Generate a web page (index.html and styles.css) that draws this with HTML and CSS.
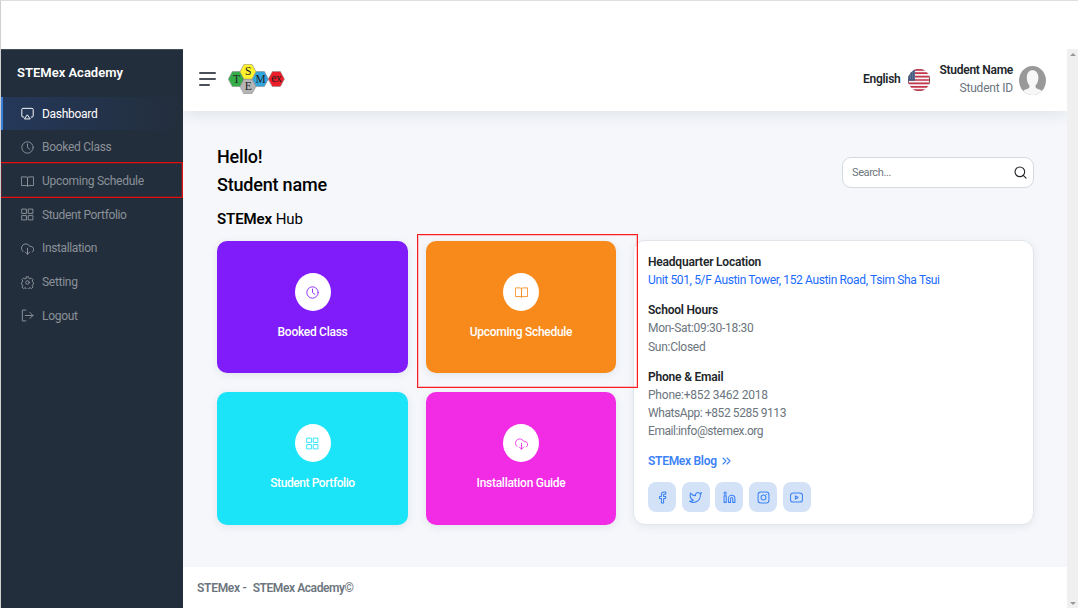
FILE: index.html
```html
<!DOCTYPE html>
<html lang="en">
<head>
<meta charset="utf-8">
<title>STEMex Academy</title>
<link rel="stylesheet" href="styles.css">
</head>
<body>
<svg class="defs" width="0" height="0">
  <defs>
    <symbol id="clock" viewBox="0 0 24 24"><circle cx="12" cy="12" r="10.5"/><path d="M12 5.5V12l4.5 3.5"/></symbol>
    <symbol id="book" viewBox="0 0 24 24"><path d="M1.5 3.5h8a2.5 2.5 0 0 1 2.5 2.5v15a2 2 0 0 0-2-1.5H1.5zM22.5 3.5h-8A2.5 2.5 0 0 0 12 6v15a2 2 0 0 1 2-1.5h8.500z"/></symbol>
    <symbol id="grid" viewBox="0 0 24 24"><path d="M2 2h8v8H2zM14 2h8v8h-8zM14 14h8v8h-8zM2 14h8v8H2z"/></symbol>
    <symbol id="cloud" viewBox="0 0 24 24"><path d="M12 11.500v11M8 18.500l4 4 4-4M3.500 17.500A8 8 0 1 1 16 8h1.500a5.800 5.800 0 0 1 3.500 10.500"/></symbol>
    <symbol id="airplay" viewBox="0 0 24 24"><path d="M5 18.500H3.500a2 2 0 0 1-2-2V4.500a2 2 0 0 1 2-2h17a2 2 0 0 1 2 2v12a2 2 0 0 1-2 2H19M12 15l5 7H7z"/></symbol>
    <symbol id="gear" viewBox="0 0 24 24"><circle cx="12" cy="12" r="3.300"/><path d="M10 1.500h4l.7 3 2 .9 2.700-1.600 2.800 2.800-1.600 2.700.9 2 2 .7v3l-2 .7-.9 2 1.600 2.700-2.800 2.800-2.700-1.600-2 .9-.7 2h-4l-.7-2-2-.9-2.700 1.600-2.800-2.800 1.600-2.700-.9-2-2-.7v-3l2-.7.9-2L1.800 6.600l2.800-2.800 2.700 1.600 2-.9z"/></symbol>
    <symbol id="logout" viewBox="0 0 24 24"><path d="M9 2H2.500v20H9M8 12h14M16.500 6.500L22 12l-5.500 5.500"/></symbol>
  </defs>
</svg>
<div class="page">
  <aside class="sidebar">
    <div class="brand">STEMex Academy</div>
    <nav class="menu">
      <a class="item active"><svg><use href="#airplay"/></svg><span>Dashboard</span></a>
      <a class="item"><svg><use href="#clock"/></svg><span>Booked Class</span></a>
      <a class="item marked"><svg><use href="#book"/></svg><span>Upcoming Schedule</span></a>
      <a class="item snug"><svg><use href="#grid"/></svg><span>Student Portfolio</span></a>
      <a class="item snug"><svg><use href="#cloud"/></svg><span>Installation</span></a>
      <a class="item"><svg><use href="#gear"/></svg><span>Setting</span></a>
      <a class="item"><svg><use href="#logout"/></svg><span>Logout</span></a>
    </nav>
  </aside>
  <div class="main">
    <header class="topbar">
      <div class="burger"><i></i><i></i><i></i></div>
      <svg class="logo" viewBox="0 0 57 30">
        <g stroke="#888" stroke-width=".6">
          <path fill="#35ae49" d="M.4 15l4-7.400h8l4 7.400-4 7.400h-8z"/>
          <path fill="#b5b5b5" d="M12 22.300l4-7.400h8l4 7.400-4 7.400h-8z"/>
          <path fill="#fff22d" d="M12 7.700L16 .3h8l4 7.400-4 7.400h-8z"/>
          <path fill="#2fa5df" d="M24.400 15l4-7.400h8l4 7.400-4 7.400h-8z"/>
          <path fill="#ed1c28" d="M40.400 15l4-7.400h8l4 7.400-4 7.400h-8z"/>
        </g>
        <g class="logo-text"><text x="8.400" y="18.700">T</text><text x="20" y="11.300">S</text><text x="20" y="26.300">E</text><text x="32.400" y="18.700">M</text><text x="48.400" y="18">ex</text></g>
      </svg>
      <div class="account">
        <span class="language">English</span>
        <svg class="flag" viewBox="0 0 22 22">
          <clipPath id="round"><circle cx="11" cy="11" r="11"/></clipPath>
          <g clip-path="url(#round)">
            <path fill="#f6f3f4" d="M0 0h22v22H0z"/>
            <path stroke="#c4354b" stroke-width="1.700" d="M0 .8h22M0 4.200h22M0 7.600h22M0 11h22M0 14.400h22M0 17.800h22M0 21.200h22"/>
            <path fill="#465b81" stroke="none" d="M0 0h7v11.800H0z"/>
            <path stroke="#a9b5c8" stroke-width=".7" stroke-dasharray=".8 1.300" d="M0 3h7M0 5h7M0 7h7M0 9h7"/>
          </g>
        </svg>
        <div class="who"><b>Student Name</b><span>Student ID</span></div>
        <svg class="avatar" viewBox="0 0 26 28">
          <clipPath id="oval"><ellipse cx="13" cy="14" rx="13" ry="14"/></clipPath>
          <g clip-path="url(#oval)"><path fill="#999" d="M0 0h26v28H0z"/><path fill="#f7f7f7" d="M7.500 11C7.500 6.500 9.800 4 13 4s5.700 2.500 5.700 7c0 3.500-1.200 6-2.700 7.500v2c0 1.500 5 2 6.500 4V28h-19v-3.500c1.500-2 6.500-2.500 6.500-4v-2C8.500 17 7.500 14.500 7.500 11z"/></g>
        </svg>
      </div>
    </header>
    <main class="content">
      <div class="intro">
        <div class="greeting"><div>Hello!</div><div>Student name</div></div>
        <div class="search"><span>Search...</span><svg viewBox="0 0 14 14"><circle cx="6.300" cy="6.300" r="5.200"/><path d="M10 10l3 3"/></svg></div>
      </div>
      <h2 class="hub"><b>STEMex</b> Hub</h2>
      <div class="board">
        <div class="tile violet"><div class="disc"><svg><use href="#clock"/></svg></div><span>Booked Class</span></div>
        <div class="tile orange"><div class="disc"><svg><use href="#book"/></svg></div><span>Upcoming Schedule</span><div class="frame"></div></div>
        <div class="tile cyan"><div class="disc"><svg><use href="#grid"/></svg></div><span class="tighter">Student Portfolio</span></div>
        <div class="tile pink"><div class="disc"><svg><use href="#cloud"/></svg></div><span>Installation Guide</span></div>
        <section class="info">
          <div class="group"><b>Headquarter Location</b><a class="tight">Unit 501, 5/F Austin Tower, 152 Austin Road, Tsim Sha Tsui</a></div>
          <div class="group"><b>School Hours</b><span>Mon-Sat:09:30-18:30</span><span>Sun:Closed</span></div>
          <div class="group"><b>Phone &amp; Email</b><span class="loose">Phone:+852 3462 2018</span><span class="tighter">WhatsApp: +852 5285 9113</span><span class="tighter">Email:info@stemex.org</span></div>
          <div class="blog"><span>STEMex Blog</span><svg viewBox="0 0 9 8"><path d="M1 1l3 3-3 3M5 1l3 3-3 3"/></svg></div>
          <div class="social">
            <a><svg viewBox="0 0 24 24"><path d="M18 2h-3a5 5 0 0 0-5 5v3H6.500v4H10v8h4v-8h3.500l.5-4h-4V7a1 1 0 0 1 1-1h3z"/></svg></a>
            <a><svg viewBox="0 0 24 24"><path d="M23 3a10.900 10.900 0 0 1-3.140 1.530 4.480 4.480 0 0 0-7.860 3v1A10.660 10.660 0 0 1 3 4s-4 9 5 13a11.640 11.640 0 0 1-7 2c9 5 20 0 20-11.500a4.500 4.500 0 0 0-.08-.83A7.720 7.720 0 0 0 23 3z"/></svg></a>
            <a><svg viewBox="0 0 24 24"><path d="M16 8a6 6 0 0 1 6 6v7h-4v-7a2 2 0 0 0-4 0v7h-4v-7a6 6 0 0 1 6-6zM2 9h4v12H2z"/><circle cx="4" cy="4" r="2"/></svg></a>
            <a><svg viewBox="0 0 24 24"><rect x="2" y="2" width="20" height="20" rx="5"/><circle cx="12" cy="12" r="4.500"/><path d="M17.500 6.500h.1"/></svg></a>
            <a><svg viewBox="0 0 24 24"><rect x="1" y="3.500" width="22" height="17" rx="5"/><path d="M10 9l5 3-5 3z"/></svg></a>
          </div>
        </section>
      </div>
    </main>
    <footer class="footer"><span>STEMex -</span><span class="tighter">STEMex Academy©</span></footer>
  </div>
  <div class="scrollbar"><i class="up"></i><i class="down"></i></div>
</div>
</body>
</html>
```
FILE: styles.css
```css
* { box-sizing: border-box; }
body {
  margin: 0;
  height: 608px;
  overflow: hidden;
  padding-top: 48px;
  border-top: 1px solid #dedede;
  border-left: 1px solid #d0d0d0;
  background: #fff;
  font-family: Roboto, "Liberation Sans", sans-serif;
  font-size: 12px;
  letter-spacing: -.28px;
  color: #212529;
}
svg { fill: none; stroke: currentColor; stroke-width: 1.6; stroke-linejoin: round; stroke-linecap: round; flex: none; }
.defs { position: absolute; }
.page { display: grid; grid-template-columns: 182px 884px 11px; height: 559px; }
.page span, .page b { white-space: nowrap; }

/* Sidebar */
.sidebar { background: #232e3c; border-top: 1px solid #42505b; }
.brand { height: 46.500px; padding-left: 16px; line-height: 45px; color: #fff; font-weight: 600; font-size: 13px; letter-spacing: 0; }
.menu { display: flex; flex-direction: column; }
.item { display: flex; align-items: center; gap: 8px; height: 33.67px; padding: 1px 0 0 20px; color: #8a9199; }
.item svg { width: 13px; height: 13px; stroke-width: 1.8; }
.item.snug { letter-spacing: -.36px; }
.active { color: #fff; background: linear-gradient(90deg, #24385a, #232e3c); box-shadow: inset 2px 0 #3b7ddd; }
.marked { position: relative; }
.marked::after { content: ""; position: absolute; inset: -2px 0 -1px -1px; border: 1px solid #e01015; box-shadow: inset 0 0 0 1px rgba(220, 16, 21, .3); }

/* Header */
.main { display: flex; flex-direction: column; }
.topbar { position: relative; display: flex; align-items: center; height: 62px; padding: 0 21px 2px 16px; background: #fff; box-shadow: 0 4px 14px rgba(45, 65, 80, .1); clip-path: inset(0 0 -24px 0); }
.burger { display: flex; flex-direction: column; gap: 4px; width: 17px; margin-right: 12px; }
.burger i { height: 2px; background: #495057; border-radius: 1px; }
.burger i:last-child { width: 11px; }
.logo { width: 57px; height: 30px; }
.logo-text { font: 11.500px "Liberation Serif", serif; text-anchor: middle; fill: #222; stroke: none; }
.account { display: flex; align-items: center; margin-left: auto; }
.language { width: 37px; margin-right: 8px; font-weight: 600; }
.flag { width: 22px; height: 22px; margin-top: 1px; stroke-linecap: butt; }
.who { display: flex; flex-direction: column; align-items: flex-end; margin: -1px 6px 0 8px; width: 75px; line-height: 18px; }
.who b { font-weight: 600; }
.who span { color: #6c757d; letter-spacing: -.2px; }
.avatar { width: 27px; height: 29px; margin-top: 2px; stroke: none; }

/* Content */
.content { height: 456px; padding: 32px 34px 0; background: #f5f7fb; color: #000; }
.intro { display: flex; justify-content: space-between; }
.greeting { font-size: 18px; font-weight: 500; line-height: 28px; letter-spacing: -.2px; }
.search { display: flex; align-items: center; justify-content: space-between; width: 192px; height: 31px; margin-top: 14px; margin-right: -1px; padding: 0 6px 1px 9px; border: 1px solid #d5dae0; border-radius: 9px; background: #fff; font-size: 11px; letter-spacing: -.4px; color: #6c757d; }
.search svg { width: 13px; height: 13px; color: #212529; stroke-width: 1.2; }
.hub { margin: 9px 0 0; font-size: 15px; line-height: 22px; font-weight: 400; letter-spacing: -.1px; }
.hub b { font-weight: 600; }
.board { display: grid; grid-template-columns: 191px 190px 400px; grid-template-rows: 132px 133px; column-gap: 18px; row-gap: 19px; margin-top: 11px; }
.tile { position: relative; display: flex; flex-direction: column; align-items: center; padding-top: 32px; border-radius: 10px; color: #fff; box-shadow: 0 2px 9px rgba(45, 65, 80, .1); line-height: 14px; font-weight: 500; }
.disc { display: grid; place-items: center; width: 36px; height: 38px; margin-bottom: 14px; border-radius: 50%; background: #fff; }
.disc svg { width: 13px; height: 13px; }
.violet { background: #801bf9; } .violet .disc { color: #801bf9; }
.orange { background: #f78a1b; } .orange .disc { color: #f78a1b; }
.cyan { background: #1be3f8; } .cyan .disc { color: #1be3f8; }
.pink { background: #f22be4; } .pink .disc { color: #f22be4; }
.frame { position: absolute; z-index: 2; left: -9px; top: -7px; width: 221px; height: 154px; border: 1px solid #fa1c20; box-shadow: inset 0 0 0 1px rgba(250, 28, 32, .25); }
.info { grid-column: 3; grid-row: 1 / 3; margin: -1px 0 0 -1px; padding: 12px 14px; border: 1px solid #e1e5ea; border-radius: 12px; background: #fff; box-shadow: 0 2px 9px rgba(45, 65, 80, .08); line-height: 18.200px; color: #6c757d; }
.group { display: flex; flex-direction: column; align-items: flex-start; margin-bottom: 11.800px; }
.group b { font-weight: 600; color: #212529; letter-spacing: -.2px; }
.group a { color: #1b6bff; white-space: nowrap; }
.page .loose { letter-spacing: -.2px; }
.page .tight { letter-spacing: -.36px; }
.page .tighter { letter-spacing: -.42px; }
.blog { display: flex; align-items: center; gap: 5px; font-weight: 600; color: #3b82f6; }
.blog svg { width: 9px; height: 8px; stroke-width: 1.1; }
.social { display: flex; gap: 5.700px; margin-top: 12px; }
.social a { display: grid; place-items: center; width: 28px; height: 30px; border-radius: 8px; background: #d3e2f7; color: #3b82f6; }
.social svg { width: 13px; height: 13px; stroke-width: 1.9; }

/* Footer and scrollbar */
.footer { display: flex; flex: 1; gap: 6px; padding: 12px 14px; background: #fff; color: #6c757d; font-weight: 600; line-height: 18px; }
.scrollbar { display: flex; flex-direction: column; align-items: center; justify-content: space-between; padding: 4px 0; background: #f0f0f0; }
.scrollbar i { border: 3px solid transparent; }
.scrollbar .up { border-top: 0; border-bottom-color: #999; }
.scrollbar .down { border-bottom: 0; border-top-color: #999; }
```
